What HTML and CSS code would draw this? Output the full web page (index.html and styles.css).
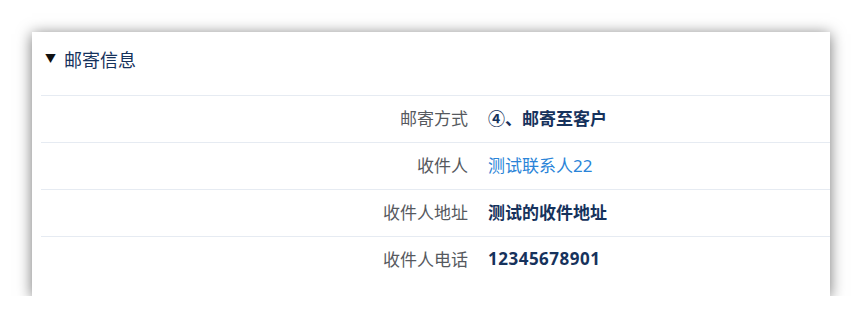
FILE: index.html
```html
<!DOCTYPE html>
<html lang="zh">
<head>
    <meta charset="UTF-8"/>
    <title>邮寄信息</title>
    <link rel="stylesheet" href="styles.css">
</head>
<body>
    <div class="tarjeta">
        <div class="cabecera">
            <span class="flecha">&#9660;</span>
            <span class="titulo">邮寄信息</span>
        </div>
        <div class="fila">
            <div class="etiqueta">邮寄方式</div>
            <div class="valor">④、邮寄至客户</div>
        </div>
        <div class="fila">
            <div class="etiqueta">收件人</div>
            <div class="valor enlace">测试联系人22</div>
        </div>
        <div class="fila">
            <div class="etiqueta">收件人地址</div>
            <div class="valor">测试的收件地址</div>
        </div>
        <div class="fila">
            <div class="etiqueta">收件人电话</div>
            <div class="valor numero">12345678901</div>
        </div>
    </div>
</body>
</html>
```

FILE: styles.css
```css
body {
    margin: 0;
    background: #ffffff;
    font-family: "Noto Sans", "Noto Sans CJK SC", sans-serif;
}
.tarjeta {
    margin: 32px 0 0 32px;
    width: 789px;
    padding: 0 0 13px 9px;
    background: #fff;
    box-shadow: 0 2px 14px rgba(0, 0, 0, 0.55);
}
.cabecera {
    display: flex;
    align-items: center;
    box-sizing: border-box;
    height: 63px;
    padding: 0 0 10px 4px;
    color: #16325c;
}
.flecha {
    font-size: 11px;
    color: #111;
    width: 19px;
    margin-top: -2px;
}
.titulo {
    font-size: 18px;
}
.fila {
    display: flex;
    align-items: center;
    box-sizing: border-box;
    height: 47px;
    padding-bottom: 4px;
    border-top: 1px solid #e6ebf2;
}
.etiqueta {
    width: 427px;
    text-align: right;
    font-size: 17px;
    color: #56595e;
}
.valor {
    margin-left: 20px;
    font-size: 17px;
    font-weight: bold;
    color: #16325c;
}
.enlace {
    font-weight: normal;
    color: #2a84d8;
}
.numero {
    letter-spacing: 0.5px;
}
```
